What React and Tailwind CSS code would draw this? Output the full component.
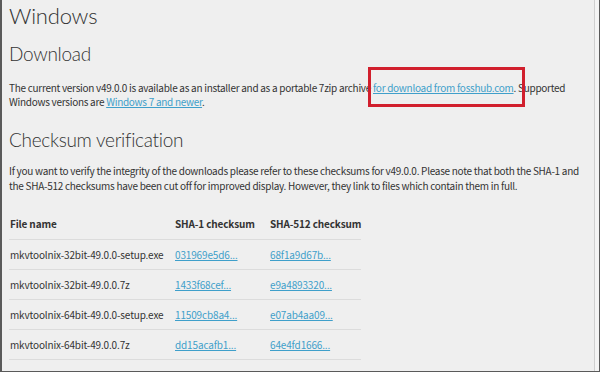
export default function App() {
  const rows = [
    ['mkvtoolnix-32bit-49.0.0-setup.exe', '031969e5d6...', '68f1a9d67b...'],
    ['mkvtoolnix-32bit-49.0.0.7z', '1433f68cef...', 'e9a4893320...'],
    ['mkvtoolnix-64bit-49.0.0-setup.exe', '11509cb8a4...', 'e07ab4aa09...'],
    ['mkvtoolnix-64bit-49.0.0.7z', 'dd15acafb1...', '64e4fd1666...'],
  ]

  const body = { fontFamily: '"Noto Sans CJK KR", "Noto Sans", sans-serif' }
  const head = { fontFamily: 'Lato, "Open Sans", sans-serif' }

  return (
    <div className="w-[600px] h-[372px] overflow-hidden flex bg-[#efefef] border-l-2 border-r border-b border-[#5a5a5a] text-[#333]">
      <div className="flex-1 pl-[7px] whitespace-nowrap">
        <h1 style={head} className="text-[22px] font-light leading-[32px] tracking-[-0.2px]">Windows</h1>

        <h2 style={head} className="mt-[8px] text-[19px] font-light leading-[28px] tracking-[-0.3px]">Download</h2>

        <p style={body} className="mt-[13px] text-[10px] leading-[14px] tracking-[-0.28px]">
          The current version v49.0.0 is available as an installer and as a portable 7zip archive{' '}
          <span className="relative">
            <a className="text-[#3f9fca] underline">for download from fosshub.com</a>
            <span className="absolute left-[-5px] right-[-11px] top-[-13px] bottom-[-12px] border-[3px] border-[#d11f2d]" />
          </span>
          . Supported
          <br />
          Windows versions are <a className="text-[#3f9fca] underline">Windows 7 and newer</a>.
        </p>

        <h2 style={head} className="mt-[17px] text-[19px] font-light leading-[28px] tracking-[-0.3px]">Checksum verification</h2>

        <p style={body} className="mt-[9px] text-[10px] leading-[15px] tracking-[-0.28px]">
          If you want to verify the integrity of the downloads please refer to these checksums for v49.0.0. Please note that both the SHA-1 and
          <br />
          the SHA-512 checksums have been cut off for improved display. However, they link to files which contain them in full.
        </p>

        <table style={body} className="mt-[15px] w-[352px] table-fixed text-[10px] tracking-[-0.15px]">
          <colgroup>
            <col className="w-[166px]" />
            <col className="w-[95px]" />
            <col className="w-[91px]" />
          </colgroup>
          <thead>
            <tr className="border-b border-[#dcdcdc] h-[31px] text-left align-top">
              <th className="font-bold pl-[1px] pt-[8px]">File name</th>
              <th className="font-bold pt-[8px]">SHA-1 checksum</th>
              <th className="font-bold pt-[8px]">SHA-512 checksum</th>
            </tr>
          </thead>
          <tbody>
            {rows.map((r) => (
              <tr key={r[0]} className="border-b border-[#dcdcdc] h-[30px]">
                <td className="pl-[1px]">{r[0]}</td>
                <td>
                  <a className="text-[#3f9fca] underline">{r[1]}</a>
                </td>
                <td>
                  <a className="text-[#3f9fca] underline">{r[2]}</a>
                </td>
              </tr>
            ))}
          </tbody>
        </table>
      </div>
      <div className="w-[5px] border-l border-[#cfcfcf] bg-[#f4f4f4]" />
    </div>
  )
}
